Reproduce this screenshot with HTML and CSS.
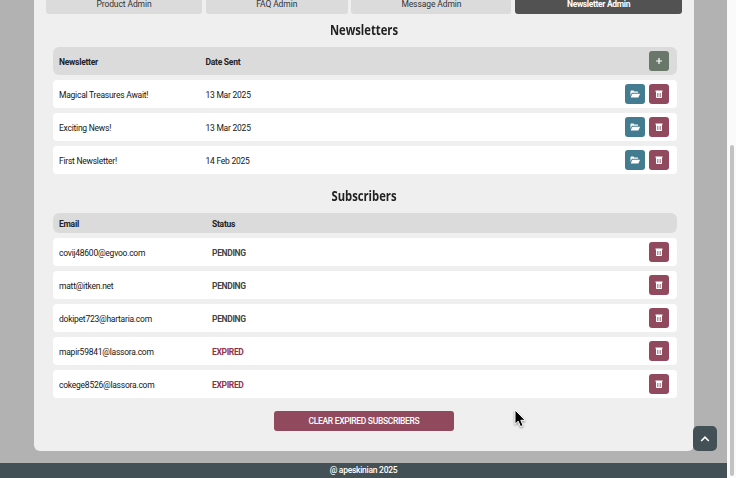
FILE: index.html
```html
<!DOCTYPE html>
<html lang="en">
<head>
<meta charset="utf-8">
<title>Newsletter Admin</title>
<link rel="stylesheet" href="styles.css">
</head>
<body>
<svg class="symbols" aria-hidden="true">
  <symbol id="trash" viewBox="0 0 10 10"><path fill="currentColor" fill-rule="evenodd" d="M1.5 1.5h7v1.3h-7zM2 2.8h6v5.4a.8.8 0 0 1-.8.8H2.8a.8.8 0 0 1-.8-.8zM3.2 3.9v4h.6v-4zM4.7 3.9v4h.6v-4zM6.2 3.9v4h.6v-4z"/></symbol>
  <symbol id="folder" viewBox="0 0 12 10"><path fill="currentColor" d="M1.5 7V2.2q0-.7.7-.7h2.3l.9.9h3q.7 0 .7.7v.7H3.4q-.6 0-.9.6zM1.7 8.4l1.4-3.2q.2-.5.7-.5h6.8q.6 0 .3.6L9.6 7.9q-.2.5-.8.5z"/></symbol>
</svg>
<div class="layout">
  <div class="page">
    <main class="panel">
      <nav class="tabs">
        <a class="tab">Product Admin</a>
        <a class="tab">FAQ Admin</a>
        <a class="tab">Message Admin</a>
        <a class="tab active">Newsletter Admin</a>
      </nav>
      <h2><span>Newsletters</span></h2>
      <section class="list newsletters">
        <div class="row head"><span>Newsletter</span><span>Date Sent</span><button class="btn add"><svg viewBox="0 0 10 10"><path d="M5 2v6M2 5h6" stroke="currentColor" stroke-width="1.2"/></svg></button></div>
        <div class="row"><span>Magical Treasures Await!</span><span>13 Mar 2025</span><button class="btn open"><svg class="wide"><use href="#folder"/></svg></button><button class="btn del"><svg><use href="#trash"/></svg></button></div>
        <div class="row"><span>Exciting News!</span><span>13 Mar 2025</span><button class="btn open"><svg class="wide"><use href="#folder"/></svg></button><button class="btn del"><svg><use href="#trash"/></svg></button></div>
        <div class="row"><span>First Newsletter!</span><span>14 Feb 2025</span><button class="btn open"><svg class="wide"><use href="#folder"/></svg></button><button class="btn del"><svg><use href="#trash"/></svg></button></div>
      </section>
      <h2 class="second"><span>Subscribers</span></h2>
      <section class="list subscribers">
        <div class="row head"><span>Email</span><span>Status</span></div>
        <div class="row"><span>covij48600@egvoo.com</span><span class="status">PENDING</span><button class="btn del"><svg><use href="#trash"/></svg></button></div>
        <div class="row"><span>matt@itken.net</span><span class="status">PENDING</span><button class="btn del"><svg><use href="#trash"/></svg></button></div>
        <div class="row"><span>dokipet723@hartaria.com</span><span class="status">PENDING</span><button class="btn del"><svg><use href="#trash"/></svg></button></div>
        <div class="row"><span>mapir59841@lassora.com</span><span class="status expired">EXPIRED</span><button class="btn del"><svg><use href="#trash"/></svg></button></div>
        <div class="row"><span>cokege8526@lassora.com</span><span class="status expired">EXPIRED</span><button class="btn del"><svg><use href="#trash"/></svg></button></div>
      </section>
      <button class="clear">CLEAR EXPIRED SUBSCRIBERS</button>
    </main>
    <footer>@ apeskinian 2025</footer>
  </div>
  <div class="scrollbar"><div class="thumb"></div></div>
</div>
<button class="to-top"><svg viewBox="0 0 12 12"><path d="M2.2 8 6 4.2 9.8 8" fill="none" stroke="currentColor" stroke-width="1.6"/></svg></button>
<svg class="cursor" viewBox="0 0 12 20"><path d="M1 1v14.2l3.2-3 2.3 5.4 2.6-1.1-2.3-5.2h4.4z" fill="#000" stroke="#fff" stroke-width="1"/></svg>
</body>
</html>
```
FILE: styles.css
```css
* { box-sizing: border-box; }
body { margin: 0; height: 478px; overflow: hidden; font: 8.5px/12px Roboto, "Liberation Sans", sans-serif; color: #151515; letter-spacing: -.24px; }
button { border: 0; padding: 0; font: inherit; letter-spacing: inherit; color: #fff; }
.symbols { display: none; }
.layout { display: flex; height: 478px; }
.page { display: flex; flex-direction: column; width: 727px; background: #b2b2b2; }
.panel { display: flex; flex-direction: column; width: 660px; height: 451px; margin-left: 34px; padding: 0 12px; background: #efefef; border-radius: 0 0 6px 6px; }
.tabs { display: grid; grid-template-columns: 156px 142px 160px 167px; column-gap: 3.7px; height: 14px; }
.tab { height: 14px; line-height: 9px; text-align: center; background: #dbdbdb; border-radius: 0 0 3px 3px; letter-spacing: -.1px; color: #333; }
.tab.active { background: #525252; color: #fff; font-weight: 700; letter-spacing: -.34px; }
h2 { display: flex; justify-content: center; margin: 0; height: 33px; padding-top: 6px; font: 700 14.5px/20px "Open Sans", "Noto Sans", sans-serif; letter-spacing: 0; color: #222; }
h2.second { height: 39px; padding-top: 12px; }
h2 span { transform: scaleX(.775); }
.list { display: flex; flex-direction: column; gap: 5px; margin: 0 5px 0 7px; }
.row { display: flex; align-items: center; gap: 4px; height: 28px; padding: 0 8px 0 6px; background: #fff; border-radius: 4px; }
.row > span { padding-top: 1px; white-space: nowrap; }
.row > span:first-child { width: 142.5px; }
.subscribers .row > span:first-child { width: 149px; }
.row .btn { flex: none; }
.row > span:nth-child(2) { margin-right: auto; }
.row.head { background: #dbdbdb; border-radius: 6px; font-weight: 700; letter-spacing: -.26px; color: #222; }
.subscribers .head { height: 20px; }
.status { font-weight: 700; letter-spacing: -.34px; color: #444; }
.status.expired { color: #95304a; }
.btn { display: flex; align-items: center; justify-content: center; width: 20px; height: 20px; border-radius: 3px; }
.btn svg { width: 10px; height: 10px; }
.btn svg.wide { width: 12px; }
.add { background: #68776a; }
.open { background: #437b91; }
.del { background: #914a5d; }
.clear { align-self: center; width: 180px; height: 20px; margin-top: 13px; background: #914a5d; border-radius: 3px; font-weight: 500; letter-spacing: -.33px; line-height: 20px; }
footer { height: 15px; margin-top: 12px; background: #435056; color: #fff; text-align: center; line-height: 15px; font-weight: 500; letter-spacing: -.27px; }
.scrollbar { width: 9px; padding: 145px 2px 2px 3px; background: #fafafa; }
.thumb { width: 4px; height: 331px; border-radius: 2px; background: #c2c2c2; }
.to-top { position: absolute; left: 693px; top: 426px; width: 24px; height: 25px; border-radius: 5px; background: #435056; display: flex; align-items: center; justify-content: center; }
.to-top svg { width: 12px; height: 12px; }
.cursor { position: absolute; left: 513.5px; top: 409px; width: 12px; height: 20px; filter: drop-shadow(0 1px 1px #0006); }
```
